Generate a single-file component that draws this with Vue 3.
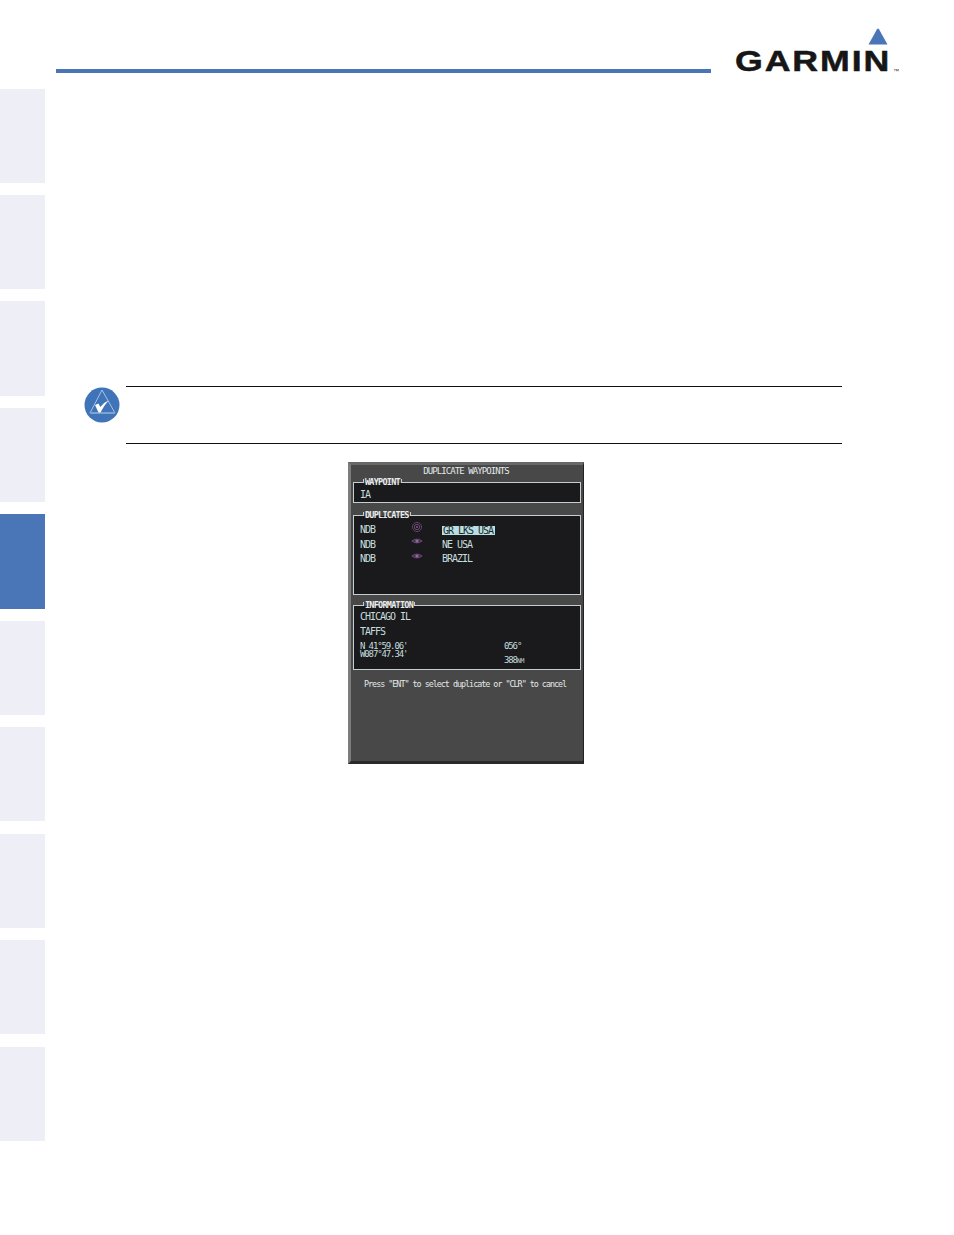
<script setup>
const tabs = Array.from({ length: 10 }, (_, i) => i);
const rows = [
  { type: "NDB", icon: "rings", region: "GR LKS USA", on: true },
  { type: "NDB", icon: "eye", region: "NE USA" },
  { type: "NDB", icon: "eye", region: "BRAZIL" },
];
</script>

<template>
  <div class="page">
    <nav class="tabs">
      <div v-for="t in tabs" :key="t" class="tab" :class="{ active: t === 4 }"></div>
    </nav>

    <main class="main">
      <header class="top">
        <div class="rule"></div>
        <div class="logo">
          <svg class="delta" width="20" height="17" viewBox="0 0 20 17">
            <path d="M10 0.5 Q10.6 0.5 11 1.2 L19.5 16.5 L0.5 16.5 L9 1.2 Q9.4 0.5 10 0.5 Z" fill="#4a76b8" />
          </svg>
          <span class="word">GARMIN</span><span class="tm">™</span>
        </div>
      </header>

      <section class="note">
        <svg class="note-icon" width="36" height="36" viewBox="0 0 36 36">
          <circle cx="18" cy="18" r="17.5" fill="#3f74b8" />
          <path d="M18 3 L6 26 L31 26 Z" fill="none" stroke="#a9c2e2" stroke-width="1" />
          <path d="M6 26 H31" stroke="#7fa2d0" stroke-width="2" />
          <path d="M11 18 L14.5 16.5 L16.3 20 Q19.5 15.5 24.5 13.5 Q20 18.5 16.5 25.5 L14.5 25.5 Z" fill="#fff" />
        </svg>
        <div class="note-body"></div>
      </section>

      <section class="screen">
        <div class="title">DUPLICATE WAYPOINTS</div>

        <div class="panel p-way">
          <span class="legend">WAYPOINT</span>
          <div class="line">IA</div>
        </div>

        <div class="panel p-dup">
          <span class="legend">DUPLICATES</span>
          <div v-for="r in rows" :key="r.region" class="dup-row">
            <span class="line">{{ r.type }}</span>
            <svg v-if="r.icon === 'rings'" class="sym" width="12" height="12" viewBox="0 0 12 12">
              <circle cx="6" cy="6" r="4.6" fill="none" stroke="#6a4474" stroke-width="0.9" />
              <circle cx="6" cy="6" r="2.7" fill="none" stroke="#75507f" stroke-width="0.9" />
              <circle cx="6" cy="6" r="0.9" fill="#8d639a" />
            </svg>
            <svg v-else class="sym" width="12" height="12" viewBox="0 0 12 12">
              <path d="M0.8 6 Q6 2.2 11.2 6 Q6 9.8 0.8 6 Z" fill="#43304a" stroke="#6f4a7a" stroke-width="0.9" />
              <circle cx="6" cy="6" r="1.6" fill="#95689f" />
            </svg>
            <span class="line" :class="{ picked: r.on }">{{ r.region }}</span>
          </div>
        </div>

        <div class="panel p-info">
          <span class="legend">INFORMATION</span>
          <div class="line info-a">CHICAGO IL</div>
          <div class="line info-b">TAFFS</div>
          <div class="coords">
            <div>
              <div class="line tight">N 41°59.06'</div>
              <div class="line tight">W087°47.34'</div>
            </div>
            <div>
              <div class="line tight">056°</div>
              <div class="line tight dist">388<small>NM</small></div>
            </div>
          </div>
        </div>

        <p class="hint">Press "ENT" to select duplicate or "CLR" to cancel</p>
      </section>
    </main>
  </div>
</template>

<style>
html,
body {
  margin: 0;
  background: #fff;
}
</style>

<style scoped>
.page {
  width: 954px;
  height: 1235px;
  display: flex;
  overflow: hidden;
  background: #fff;
}

.tabs {
  width: 45px;
  flex: none;
  padding-top: 88.6px;
  display: flex;
  flex-direction: column;
  gap: 12.25px;
}

.tab {
  height: 94.2px;
  background: #eeeef7;
}

.tab.active {
  background: #4a75b6;
}

.main {
  flex: 1;
  min-width: 0;
}

.top {
  height: 73px;
  display: flex;
  align-items: flex-end;
  margin-left: 11px;
}

.rule {
  width: 655px;
  height: 4px;
  background: #4a76b8;
}

.logo {
  position: relative;
  margin-left: 24px;
  width: 165px;
  height: 48px;
}

.delta {
  position: absolute;
  left: 133px;
  top: 3px;
}

.word {
  position: absolute;
  left: 0;
  bottom: -5px;
  font: bold 30px "Liberation Sans", sans-serif;
  letter-spacing: 1.6px;
  color: #161616;
  -webkit-text-stroke: 0.5px #161616;
  transform: scaleX(1.19);
  transform-origin: left bottom;
}

.tm {
  position: absolute;
  left: 158px;
  bottom: -1px;
  font: 6px "Liberation Sans", sans-serif;
  color: #333;
}

.note {
  margin-top: 313px;
  margin-left: 39px;
  display: flex;
  gap: 6px;
}

.note-icon {
  margin-top: 1px;
  margin-left: -0.5px;
}

.note-body {
  width: 716px;
  height: 56px;
  border-top: 1px solid #111;
  border-bottom: 1px solid #111;
}

.screen {
  box-sizing: border-box;
  width: 236px;
  height: 302px;
  margin: 18px 0 0 303px;
  padding: 0 2px;
  display: flex;
  flex-direction: column;
  align-items: stretch;
  background: #484848;
  border-top: 3px solid #686868;
  border-left: 3px solid #7c7c7c;
  border-right: 1px solid #222;
  border-bottom: 3px solid #2a2a2a;
  font-family: "DejaVu Sans Mono", monospace;
  color: #c4dedc;
}

.title {
  height: 14px;
  margin-top: 1px;
  padding-right: 2px;
  text-align: center;
  font-size: 9px;
  line-height: 11px;
  letter-spacing: -0.93px;
  color: #e4e8e8;
}

.panel {
  position: relative;
  box-sizing: border-box;
  background: #1a1a1c;
  border: 1px solid #c6cfcf;
  padding-left: 6px;
}

.p-way {
  height: 21px;
  margin-top: 2px;
  padding-top: 1px;
}

.p-dup {
  height: 80px;
  margin-top: 12px;
  padding-top: 7px;
}

.p-info {
  height: 65px;
  margin-top: 10px;
  padding-top: 4px;
}

.legend {
  position: absolute;
  left: 9px;
  top: -5px;
  height: 9px;
  padding: 0 1px;
  font-size: 8.5px;
  font-weight: bold;
  line-height: 9px;
  letter-spacing: -0.75px;
  color: #e8ecec;
  background: linear-gradient(#484848 0 5px, #1a1a1c 5px);
  border-left: 1px solid #c6cfcf;
  border-right: 1px solid #c6cfcf;
  border-image: linear-gradient(transparent 0 2px, #c6cfcf 2px 5px, transparent 5px) 1;
}

.line {
  font-size: 10px;
  line-height: 14px;
  letter-spacing: -1.02px;
  white-space: nowrap;
}

.p-way .line {
  line-height: 21px;
}

.dup-row {
  display: grid;
  grid-template-columns: 50px 32px auto;
  justify-items: start;
  align-items: center;
  height: 14.5px;
}

.sym {
  margin: -7px 0 0 1px;
}

.picked {
  padding: 0 2px 0 1px;
  line-height: 9px;
  color: #1c2a2c;
  background: #b9dfe2;
}

.info-b {
  margin-top: 0.5px;
}

.coords {
  display: grid;
  grid-template-columns: 144px auto;
  margin-top: 3px;
}

.tight {
  font-size: 9px;
  line-height: 8px;
  letter-spacing: -1.12px;
}

.dist {
  margin-top: 6px;
}

.dist small {
  font-size: 6.5px;
  letter-spacing: -0.2px;
}

.hint {
  margin: 9px 0 0 11px;
  font-size: 8.4px;
  line-height: 10px;
  letter-spacing: -1px;
  white-space: nowrap;
  color: #e4e8e8;
}
</style>
